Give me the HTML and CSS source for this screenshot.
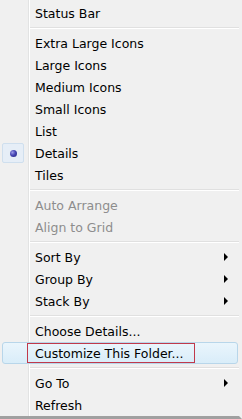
FILE: index.html
```html
<!DOCTYPE html>
<html>
<head>
<meta charset="utf-8">
<link rel="stylesheet" href="styles.css">
</head>
<body>
<div class="menu">
  <div class="item">Status Bar</div>
  <div class="sep"></div>
  <div class="item">Extra Large Icons</div>
  <div class="item">Large Icons</div>
  <div class="item">Medium Icons</div>
  <div class="item">Small Icons</div>
  <div class="item">List</div>
  <div class="item checked"><span class="check"><span class="dot"></span></span>Details</div>
  <div class="item">Tiles</div>
  <div class="sep"></div>
  <div class="item disabled">Auto Arrange</div>
  <div class="item disabled">Align to Grid</div>
  <div class="sep"></div>
  <div class="item sub">Sort By<span class="arrow"></span></div>
  <div class="item sub">Group By<span class="arrow"></span></div>
  <div class="item sub">Stack By<span class="arrow"></span></div>
  <div class="sep"></div>
  <div class="item">Choose Details...</div>
  <div class="item hot"><span class="mark">Customize This Folder...</span></div>
  <div class="sep"></div>
  <div class="item sub">Go To<span class="arrow"></span></div>
  <div class="item">Refresh</div>
</div>
</body>
</html>
```
FILE: styles.css
```css
html, body {
  margin: 0;
  padding: 0;
  background: #f0f0f0;
}
.menu {
  width: 242px;
  height: 419px;
  box-sizing: border-box;
  padding-top: 2px;
  display: flex;
  flex-direction: column;
  font-family: "DejaVu Sans", Verdana, sans-serif;
  font-size: 12.5px;
  color: #000;
  background:
    linear-gradient(to right, transparent 28px, #e2e3e3 28px, #e2e3e3 29px, #ffffff 29px, #ffffff 30px, transparent 30px),
    #f0f0f0;
  border-bottom: 3px solid #a0a0a0;
  border-right: 3px solid #f0f0f0;
}
.item {
  height: 22px;
  flex: none;
  display: flex;
  align-items: center;
  padding-left: 35px;
  box-sizing: border-box;
  position: relative;
}
.disabled {
  color: #8d8d8d;
}
.sep {
  height: 8px;
  flex: none;
  box-sizing: border-box;
  padding-top: 3px;
  margin-left: 30px;
}
.sep::before {
  content: "";
  display: block;
  height: 1px;
  background: #e0e0e0;
  border-bottom: 1px solid #ffffff;
}
.sub {
  justify-content: space-between;
  padding-right: 11px;
}
.arrow {
  width: 0;
  height: 0;
  border-left: 4px solid #000;
  border-top: 4px solid transparent;
  border-bottom: 4px solid transparent;
}
.check {
  position: absolute;
  left: 2px;
  top: 1px;
  width: 22px;
  height: 20px;
  box-sizing: border-box;
  border: 1px solid #cfdfee;
  border-radius: 2px;
  background: #e6eef7;
  display: flex;
  align-items: center;
  justify-content: center;
}
.dot {
  width: 7px;
  height: 7px;
  border-radius: 50%;
  background: radial-gradient(circle at 35% 35%, #9a9ae8 0, #4646b4 45%, #22227a 100%);
}
.hot {
  margin: 0 1px 0 2px;
  padding-left: 24px;
  border: 1px solid #b8d6ea;
  border-radius: 3px;
  background: linear-gradient(to bottom, #eaf5fc, #d9edf9);
}
.mark {
  border: 1px solid #c0394b;
  height: 20px;
  box-sizing: border-box;
  display: flex;
  align-items: center;
  padding: 0 10px 0 7px;
}
```
